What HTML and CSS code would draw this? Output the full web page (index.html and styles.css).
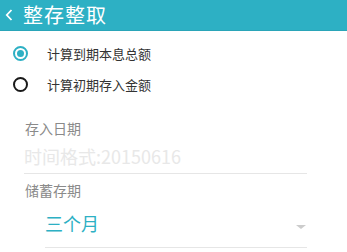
FILE: index.html
```html
<!DOCTYPE html>
<html lang="zh">
<head>
<meta charset="UTF-8">
<meta name="viewport" content="width=device-width, initial-scale=1.0">
<title>整存整取</title>
    <link rel="stylesheet" href="styles.css">
</head>
<body>
    <div class="header">
        <span class="back">
            <svg width="8" height="12" viewBox="0 0 8 12"><path d="M6.5 1 L1.8 6 L6.5 11" fill="none" stroke="#fff" stroke-width="1.8"/></svg>
        </span>
        <span class="title">整存整取</span>
    </div>
    <div class="options">
        <div class="option">
            <span class="radio checked"></span>
            <span class="option-text">计算到期本息总额</span>
        </div>
        <div class="option">
            <span class="radio"></span>
            <span class="option-text">计算初期存入金额</span>
        </div>
    </div>
    <div class="form">
        <div class="label">存入日期</div>
        <div class="input">时间格式:20150616</div>
        <div class="label label-second">储蓄存期</div>
        <div class="select">
            <span class="select-value">三个月</span>
            <span class="arrow"></span>
        </div>
    </div>
</body>
</html>
```

FILE: styles.css
```css
body{
    margin: 0;
    background-color: #ffffff;
    font-family: "Noto Sans CJK SC", "Noto Sans", sans-serif;
}
.header{
    height: 30px;
    background-color: #2db0c4;
    border-bottom: 1px solid #2aa5b8;
    display: flex;
    align-items: center;
    color: #ffffff;
}
.back{
    display: flex;
    margin-left: 5px;
    width: 18px;
}
.title{
    font-size: 20px;
    letter-spacing: 1px;
    line-height: 30px;
}
.options{
    padding-top: 7px;
}
.option{
    height: 31px;
    display: flex;
    align-items: center;
}
.radio{
    box-sizing: border-box;
    width: 15px;
    height: 15px;
    margin-left: 13px;
    border: 2px solid #1a1a1a;
    border-radius: 50%;
    display: flex;
    align-items: center;
    justify-content: center;
}
.radio.checked{
    border-color: #2db0c4;
}
.radio.checked::after{
    content: "";
    width: 7px;
    height: 7px;
    border-radius: 50%;
    background-color: #2db0c4;
}
.option-text{
    margin-left: 19px;
    font-size: 13px;
    color: #333333;
}
.form{
    padding: 19px 40px 0 24px;
}
.label{
    font-size: 14px;
    color: #8a8a8a;
    line-height: 18px;
    padding-left: 1px;
}
.input{
    margin-top: 8px;
    font-size: 18px;
    color: #e8e8e8;
    line-height: 22px;
    padding-bottom: 6px;
    border-bottom: 1px solid #e6e6e6;
}
.label-second{
    margin-top: 7px;
}
.select{
    margin-left: 21px;
    height: 49px;
    display: flex;
    align-items: center;
    justify-content: space-between;
    border-bottom: 1px solid #e6e6e6;
    box-sizing: border-box;
}
.select-value{
    font-size: 18px;
    color: #2db0c4;
}
.arrow{
    width: 0;
    height: 0;
    border-left: 5px solid transparent;
    border-right: 5px solid transparent;
    border-top: 4px solid #cccccc;
    margin-top: 8px;
    margin-right: 1px;
}
```
